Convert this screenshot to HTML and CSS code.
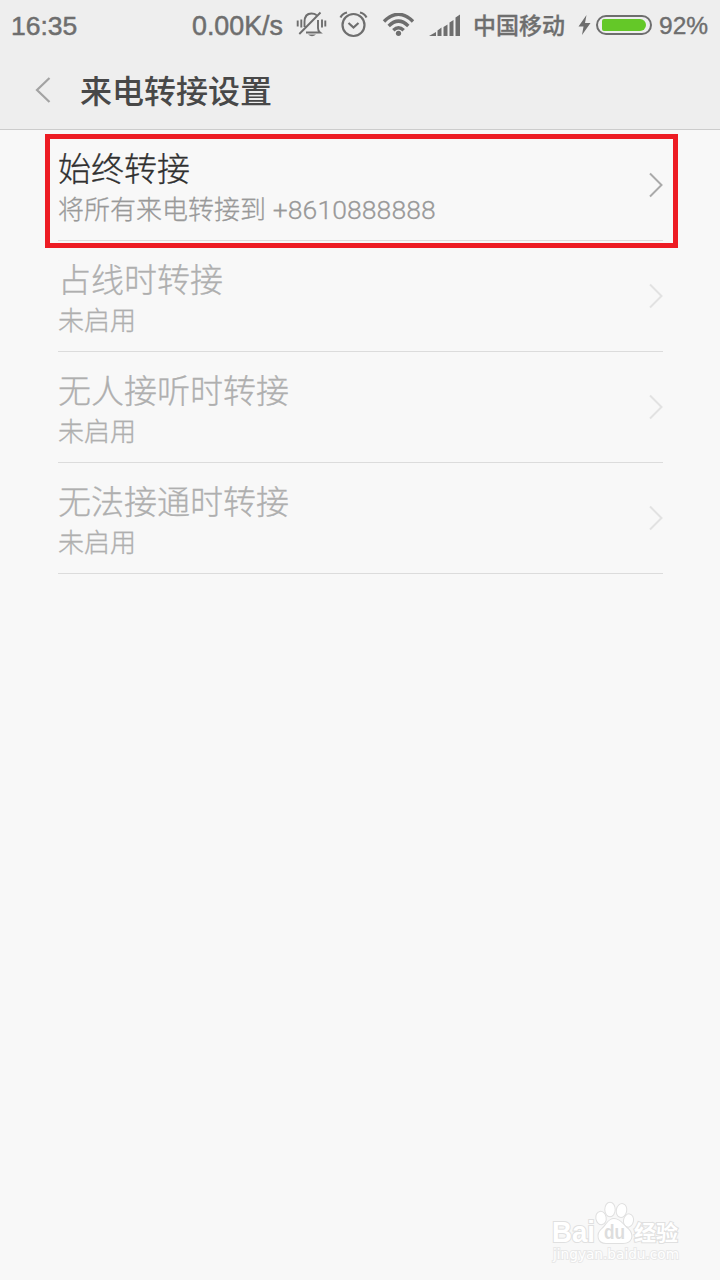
FILE: index.html
```html
<!DOCTYPE html>
<html lang="zh-CN">
<head>
  <meta charset="UTF-8">
  <meta name="viewport" content="width=device-width, initial-scale=1.0">
  <title>来电转接设置</title>
  <link rel="stylesheet" href="styles.css">
</head>
<body>
  <header class="header">
    <div class="status-bar">
      <span class="time">16:35</span>
      <span class="rate">0.00K/s</span>
      <svg class="icon silent" width="32" height="30" viewBox="0 0 32 30" fill="none" stroke="#6e6e6e" stroke-width="1.900">
        <path d="M1.700 9.500v6M5.300 8.500v8M26 8.500v8M29.300 9.500v6M8.500 16v-5C8.500 5 11.500 2.500 15.500 2.500q3 0 5 1.500M22 9v8q0 3 2 4.500H10M3.300 23L24.500 1.500"/>
        <path d="M12 23.500h8q-4 3.500-8 0z" fill="#6e6e6e" stroke="none"/>
      </svg>
      <svg class="icon alarm" width="30" height="30" viewBox="0 0 30 30" fill="none" stroke="#6e6e6e" stroke-width="2.200">
        <circle cx="14.500" cy="14" r="11"/>
        <path d="M9.500 12l5 4.500 5-4.500M1.500 6.500q2-4 6.500-5M27.500 6.500q-2-4-6.500-5"/>
      </svg>
      <svg class="icon wifi" width="34" height="26" viewBox="0 0 34 26" fill="none" stroke="#6e6e6e" stroke-width="3.400">
        <path d="M2 8.500Q16.500-6 31 8.500M6.700 13Q16.500 3.300 26.300 13M11.300 17.300Q16.500 12.300 21.700 17.300"/>
        <circle cx="16.500" cy="20.300" r="2.600" fill="#6e6e6e" stroke="none"/>
      </svg>
      <svg class="icon signal" width="34" height="24" viewBox="0 0 34 24" fill="#6e6e6e">
        <path d="M1 22l7-4v4zM9.500 22v-5.500l4-3V22zM15.500 22v-9l4-2.500V22zM21.500 22V8.500l4-2.500V22zM27.500 22V3.500l4.500-3V22z"/>
      </svg>
      <span class="carrier">中国移动</span>
      <svg class="icon bolt" width="13" height="22" viewBox="0 0 13 22" fill="#6e6e6e">
        <path d="M8.500 0L.5 11.500h5L4 20l8.500-12H7z"/>
      </svg>
      <span class="battery"><span class="battery-level"></span></span>
      <span class="percent">92%</span>
    </div>
    <div class="title-bar">
      <svg class="back" width="18" height="28" viewBox="0 0 18 28" fill="none" stroke="#a3a3a3" stroke-width="2.200">
        <path d="M16.500 2L4 14l12.500 12"/>
      </svg>
      <h1 class="title">来电转接设置</h1>
    </div>
  </header>

  <main class="list">
    <div class="row active">
      <div class="text">
        <div class="name">始终转接</div>
        <div class="desc">将所有来电转接到 <span class="number">+8610888888</span></div>
      </div>
      <svg class="arrow" width="16" height="26" viewBox="0 0 16 26"><path d="M3 1.500L14.500 13 3 24.500"/></svg>
      <div class="highlight"></div>
    </div>
    <div class="row">
      <div class="text">
        <div class="name">占线时转接</div>
        <div class="desc">未启用</div>
      </div>
      <svg class="arrow" width="16" height="26" viewBox="0 0 16 26"><path d="M3 1.500L14.500 13 3 24.500"/></svg>
    </div>
    <div class="row">
      <div class="text">
        <div class="name">无人接听时转接</div>
        <div class="desc">未启用</div>
      </div>
      <svg class="arrow" width="16" height="26" viewBox="0 0 16 26"><path d="M3 1.500L14.500 13 3 24.500"/></svg>
    </div>
    <div class="row">
      <div class="text">
        <div class="name">无法接通时转接</div>
        <div class="desc">未启用</div>
      </div>
      <svg class="arrow" width="16" height="26" viewBox="0 0 16 26"><path d="M3 1.500L14.500 13 3 24.500"/></svg>
    </div>
  </main>

  <div class="watermark">
    <svg width="140" height="70" viewBox="0 0 140 70">
      <g class="mark">
        <ellipse cx="51" cy="20" rx="4.700" ry="6.200" transform="rotate(-10 51 20)"/>
        <ellipse cx="60" cy="11.500" rx="4.700" ry="6.800"/>
        <ellipse cx="71.500" cy="12.500" rx="4.700" ry="6.500" transform="rotate(12 71.500 12.500)"/>
        <ellipse cx="78.500" cy="22.500" rx="4.500" ry="6.200" transform="rotate(10 78.500 22.500)"/>
        <path d="M64 21c-6 0-7 6-12 10-6 5-4 14 4 14 4 0 13 0 17 0 9 0 11-8 5-14-5-4-8-10-14-10z"/>
        <text class="latin" x="2" y="44" textLength="43" lengthAdjust="spacingAndGlyphs">Bai</text>
        <text class="du" x="54" y="41" textLength="21" lengthAdjust="spacingAndGlyphs">du</text>
        <text class="cjk" x="84" y="42" textLength="44" lengthAdjust="spacingAndGlyphs">经验</text>
        <text class="url" x="3" y="61" textLength="126" lengthAdjust="spacingAndGlyphs">jingyan.baidu.com</text>
      </g>
    </svg>
  </div>
</body>
</html>
```
FILE: styles.css
```css
:root {
  --status-color: #6e6e6e;
  --header-color: #eeeeee;
  --background-color: #f8f8f8;
  --line-color: #dcdcdc;
  --highlight-color: #ed1c24;
}

* {
  box-sizing: border-box;
}

body {
  margin: 0;
  min-height: 1280px;
  display: flex;
  flex-direction: column;
  font-family: "Liberation Sans", "Noto Sans CJK SC", sans-serif;
  background: var(--background-color);
}

.header {
  height: 130px;
  background: var(--header-color);
  border-bottom: 1px solid #cccccc;
}

.status-bar {
  display: flex;
  align-items: center;
  height: 52px;
  padding-left: 11px;
  font-size: 26.5px;
  white-space: nowrap;
  color: var(--status-color);
  -webkit-text-stroke: 0.5px var(--status-color);
}

.status-bar > * {
  flex-shrink: 0;
}

.time {
  width: 181px;
}

.rate {
  width: 104px;
  font-size: 26.8px;
}

.silent {
  margin-right: 11px;
}

.alarm {
  margin-right: 13px;
}

.wifi {
  margin-right: 12px;
}

.signal {
  margin-right: 11px;
}

.carrier {
  width: 105px;
  padding-bottom: 5px;
  font-family: "Noto Sans CJK SC", sans-serif;
  font-size: 23px;
  font-weight: 500;
  -webkit-text-stroke: 0.3px;
}

.battery {
  width: 56px;
  height: 20px;
  margin: 0 7px 2px 5px;
  padding: 2px;
  border: 2px solid var(--status-color);
  border-radius: 10px;
}

.battery-level {
  display: block;
  width: 44px;
  height: 12px;
  margin-left: 2px;
  border-radius: 2px 6px 6px 2px;
  background: #64c828;
}

.percent {
  font-size: 24.5px;
  -webkit-text-stroke: 0.4px;
}

.title-bar {
  display: flex;
  align-items: center;
  height: 75px;
  padding-left: 33px;
}

.title {
  margin: 0 0 1px 29px;
  font-family: "Noto Sans CJK SC", sans-serif;
  font-size: 32px;
  font-weight: 500;
  line-height: 48px;
  color: #484848;
}

.list {
  padding: 0 57px 0 58px;
  font-family: "Noto Sans CJK SC", sans-serif;
}

.row {
  position: relative;
  display: flex;
  justify-content: space-between;
  align-items: center;
  height: 111px;
  border-bottom: 1px solid var(--line-color);
  color: #afafaf;
}

.text {
  padding-top: 5px;
  -webkit-text-stroke: 0.3px;
}

.name {
  font-size: 33px;
  font-weight: 300;
  line-height: 41px;
}

.desc {
  height: 40px;
  font-size: 26px;
  font-weight: 300;
  line-height: 40px;
}

.number {
  margin-left: 1px;
  font-family: Roboto, sans-serif;
  font-size: 26.5px;
  letter-spacing: 0.1px;
  line-height: 1;
}

.arrow {
  fill: none;
  stroke: #e2e2e2;
  stroke-width: 2;
}

.active .name {
  color: #303030;
}

.active .desc {
  color: #999999;
}

.active .arrow {
  stroke: #aaaaaa;
}

/* red frame around the chosen row */
.highlight {
  position: absolute;
  top: 4px;
  left: -13px;
  width: 633px;
  height: 114px;
  border: 5px solid var(--highlight-color);
}

.watermark {
  display: flex;
  justify-content: flex-end;
  margin-top: auto;
  padding: 0 30px 12px 0;
}

.mark {
  fill: #ffffff;
  stroke: #e0e0e0;
  stroke-width: 2;
  paint-order: stroke;
}

.latin {
  font: bold 29px "Liberation Sans", sans-serif;
}

.du {
  font: bold 20px "Liberation Sans", sans-serif;
  fill: #dddddd;
  stroke: none;
}

.cjk {
  font: bold 21px "Noto Sans CJK SC", sans-serif;
}

.url {
  font: 14px "DejaVu Sans", sans-serif;
  stroke: #e8e8e8;
}
```
